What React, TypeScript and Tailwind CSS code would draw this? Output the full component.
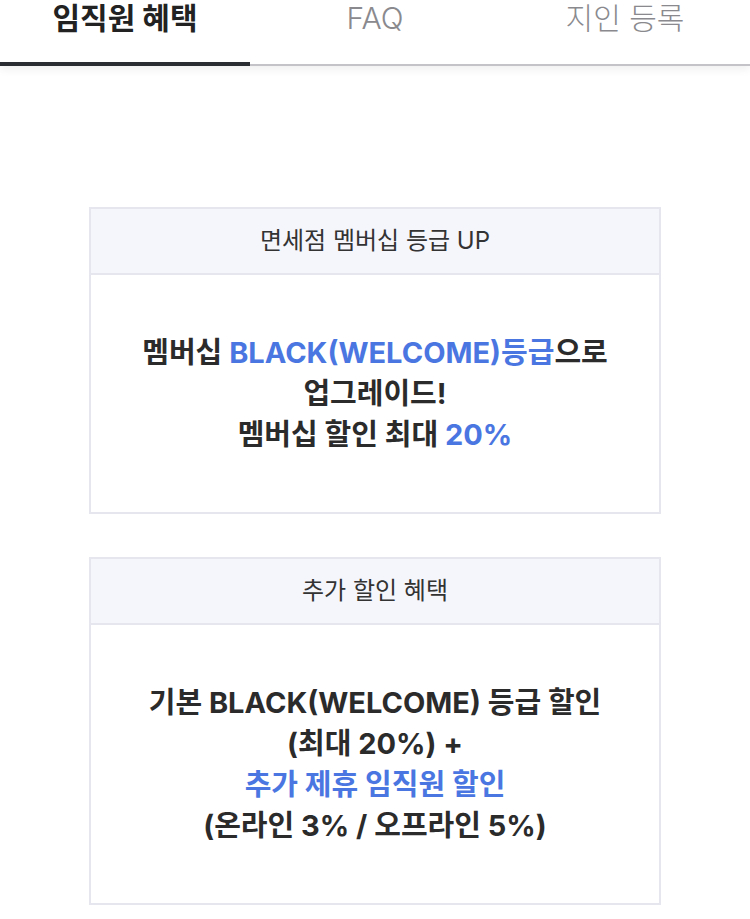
const font = { fontFamily: 'Inter, "Noto Sans CJK KR", "Noto Sans", sans-serif' };

const tabs = ["임직원 혜택", "FAQ", "지인 등록"];

function BenefitBox({ title, children }: { title: string; children: React.ReactNode }) {
  return (
    <div className="border-2 border-[#e6e7ee] bg-white">
      <div className="h-[66px] flex items-center justify-center bg-[#f5f6fc] border-b-2 border-[#e6e7ee] text-[24px] text-[#333333]">
        {title}
      </div>
      <div className="py-[57px] text-center text-[29px] leading-[41px] font-bold text-[#2b2b2b]">
        {children}
      </div>
    </div>
  );
}

export default function App() {
  return (
    <div className="min-h-screen bg-white" style={font}>
      <nav className="relative flex h-[66px] border-b-2 border-[#c4c4c8] shadow-[0_4px_8px_rgba(0,0,0,0.06)]">
        {tabs.map((t, i) => (
          <div
            key={t}
            className={`relative flex-1 flex justify-center text-[30px] leading-[36px] ${
              i === 0 ? "font-bold text-[#222222]" : "font-light text-[#8a8a8e]"
            }`}
          >
            {t}
            {i === 0 && <div className="absolute left-0 right-0 -bottom-[2px] h-[4px] bg-[#2a2d31]" />}
          </div>
        ))}
      </nav>

      <main className="px-[89px] pt-[141px] pb-10 flex flex-col gap-[43px]">
        <BenefitBox title="면세점 멤버십 등급 UP">
          멤버십 <span className="text-[#4a76e2]">BLACK(WELCOME)등급</span>으로
          <br />
          업그레이드!
          <br />
          멤버십 할인 최대 <span className="text-[#4a76e2]">20%</span>
        </BenefitBox>

        <BenefitBox title="추가 할인 혜택">
          기본 BLACK(WELCOME) 등급 할인
          <br />
          (최대 20%) +
          <br />
          <span className="text-[#4a76e2]">추가 제휴 임직원 할인</span>
          <br />
          (온라인 3% / 오프라인 5%)
        </BenefitBox>
      </main>
    </div>
  );
}
